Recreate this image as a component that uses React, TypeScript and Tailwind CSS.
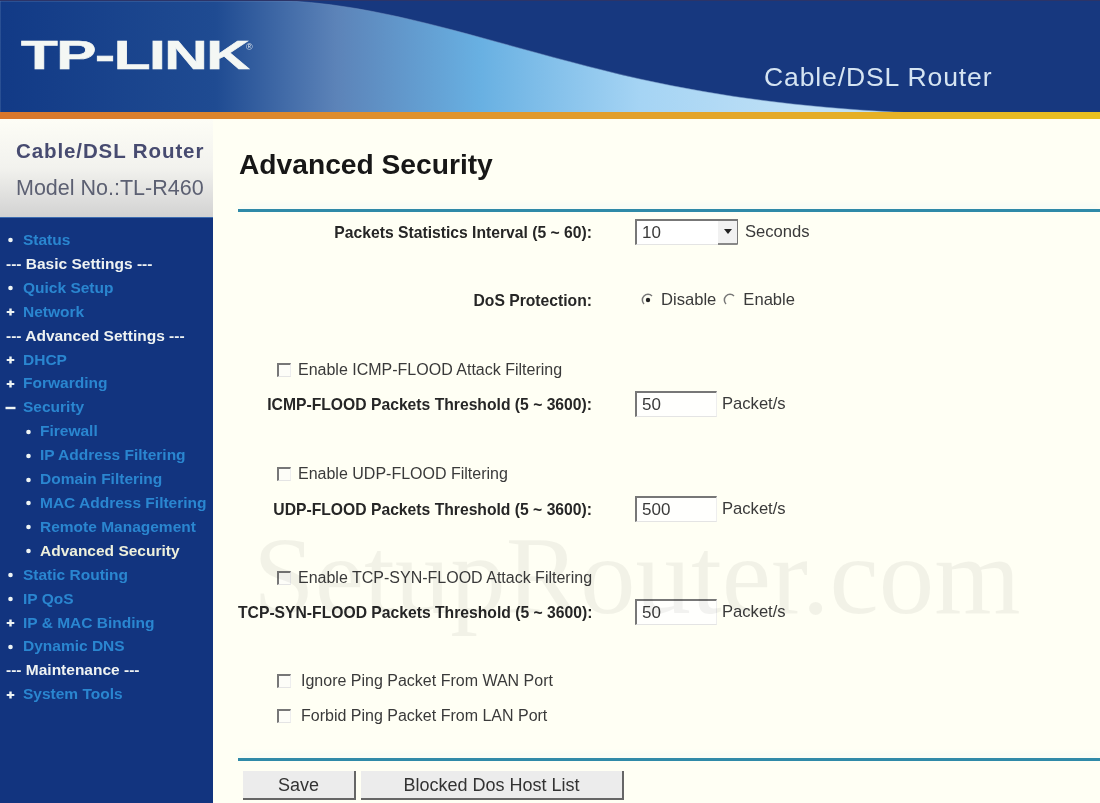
import type { ReactNode } from "react";

const menu = [
  { label: "Status", mark: "dot" },
  { label: "--- Basic Settings ---", head: true },
  { label: "Quick Setup", mark: "dot" },
  { label: "Network", mark: "plus" },
  { label: "--- Advanced Settings ---", head: true },
  { label: "DHCP", mark: "plus" },
  { label: "Forwarding", mark: "plus" },
  { label: "Security", mark: "minus" },
  { label: "Firewall", mark: "dot", sub: true },
  { label: "IP Address Filtering", mark: "dot", sub: true },
  { label: "Domain Filtering", mark: "dot", sub: true },
  { label: "MAC Address Filtering", mark: "dot", sub: true },
  { label: "Remote Management", mark: "dot", sub: true },
  { label: "Advanced Security", mark: "dot", sub: true, active: true },
  { label: "Static Routing", mark: "dot" },
  { label: "IP QoS", mark: "dot" },
  { label: "IP & MAC Binding", mark: "plus" },
  { label: "Dynamic DNS", mark: "dot" },
  { label: "--- Maintenance ---", head: true },
  { label: "System Tools", mark: "plus" },
];

function Mark({ kind }: { kind?: string }) {
  return (
    <svg width="11" height="11" viewBox="0 0 11 11" className="shrink-0" fill="#eef4f4">
      {kind === "dot" && <circle cx="5.5" cy="6" r="2.3" />}
      {kind === "plus" && <path d="M4.3 2.5h2.4v2.4h2.6v2.2H6.7v2.4H4.3V7.100H1.700V4.900h2.600z" />}
      {kind === "minus" && <rect x="0.500" y="4.800" width="10" height="2.400" />}
    </svg>
  );
}

function Sidebar() {
  return (
    <aside className="flex w-[213px] shrink-0 flex-col">
      <div className="h-[98px] bg-gradient-to-b from-[#fdfdf6] via-[#f2f2ee] to-[#d2d2d2] pl-4 pt-[20px]">
        <div className="text-[20.500px] leading-6 font-bold tracking-[0.9px] whitespace-nowrap text-[#474b70]">Cable/DSL Router</div>
        <div className="mt-[13px] text-[21.500px] leading-6 whitespace-nowrap text-[#5c6072]">Model No.:TL-R460</div>
      </div>
      <nav className="flex-1 border-t border-[#3d6cb0] bg-[#12347f] pt-[10px] text-[15.500px] leading-[23.900px] font-bold">
        {menu.map((item) =>
          item.head ? (
            <div key={item.label} className="pl-[6px] whitespace-nowrap text-[#eef2f2]">
              {item.label}
            </div>
          ) : (
            <div key={item.label} className={`flex items-center whitespace-nowrap ${item.sub ? "pl-[23px]" : "pl-[5px]"}`}>
              <Mark kind={item.mark} />
              <span className={item.sub ? "ml-[6px]" : "ml-[7px]"}>
                <span className={item.active ? "text-[#eef0dc]" : "text-[#2a86d0]"}>{item.label}</span>
              </span>
            </div>
          ),
        )}
      </nav>
    </aside>
  );
}

function Rule({ className }: { className: string }) {
  return <div className={`h-[3px] bg-[#2f8aa8] shadow-[0_-4px_6px_#eef8f8] ${className}`} />;
}

function Row({ label, className, children }: { label: string; className: string; children: ReactNode }) {
  return (
    <div className={`flex h-[26px] items-center ${className}`}>
      <div className="w-[354px] pt-[1px] text-right text-[15.700px] font-bold whitespace-nowrap text-[#262626]">{label}</div>
      <div className="ml-[43px] flex items-center text-[16.600px] text-[#3a3a3a]">{children}</div>
    </div>
  );
}

function CheckRow({ label, className, textGap }: { label: string; className: string; textGap: string }) {
  return (
    <div className={`flex h-[22px] items-center pl-[39px] text-[16px] whitespace-nowrap text-[#3a3a3a] ${className}`}>
      <span className="h-[14px] w-[14px] border-t-2 border-r border-b border-l-2 border-t-[#777] border-r-[#eeeeee] border-b-[#e4e4e4] border-l-[#777] bg-[#fdfdf8]" />
      <span className={textGap}>{label}</span>
    </div>
  );
}

function TextBox({ value }: { value: string }) {
  return (
    <div className="h-[26px] w-[82px] border-t-2 border-r border-b border-l-2 border-t-[#777] border-r-[#eeeeee] border-b-[#e4e4e4] border-l-[#777] bg-white/80 pl-[5px] text-[17px] leading-[24px]">
      {value}
    </div>
  );
}

function Radio({ on }: { on?: boolean }) {
  return (
    <svg width="14" height="14" viewBox="0 0 14 14" className="shrink-0" fill="none">
      <path d="M11 3a5.500 5.500 0 0 0-8 8" stroke="#777" strokeWidth="1.500" />
      {on && <circle cx="7" cy="7" r="2.200" fill="#222" />}
    </svg>
  );
}

function Button({ label, className }: { label: string; className: string }) {
  return (
    <div className={`flex h-[29px] items-center justify-center border-r-2 border-b-2 border-r-[#666] border-b-[#666] bg-[#ececec] pt-[1px] text-[18px] text-[#333] ${className}`}>
      {label}
    </div>
  );
}

export default function App() {
  return (
    <div className="relative h-[803px] w-[1100px] overflow-hidden bg-[#fffff4] font-['Liberation_Sans',Arial,sans-serif] blur-[0.4px]">
      <header className="relative h-[112px] overflow-hidden border-t border-[#2c3468] bg-[#17387f]">
        <svg className="absolute inset-0" width="1100" height="112" viewBox="0 0 1100 112">
          <defs>
            <linearGradient id="wave" x1="0" x2="800" y1="0" y2="0" gradientUnits="userSpaceOnUse">
              <stop offset="0" stopColor="#123a86" />
              <stop offset="0.27" stopColor="#1f4b92" />
              <stop offset="0.42" stopColor="#5c83b8" />
              <stop offset="0.6" stopColor="#68b0e2" />
              <stop offset="0.8" stopColor="#a5d4f4" />
              <stop offset="1" stopColor="#bfe0f6" />
            </linearGradient>
          </defs>
          <path d="M290 0C400 6 500 46 640 78C730 98 820 108 915 112H0V0Z" fill="url(#wave)" stroke="#6f8fbe" strokeWidth="1" strokeOpacity="0.5" />
        </svg>
        <div className="absolute top-[26px] left-[21px] origin-left scale-x-[1.47] text-[41px] leading-[56px] font-bold tracking-[-1px] text-[#f4f7f4] [-webkit-text-stroke:0.6px_#f4f7f4]">
          TP-LINK
        </div>
        <div className="absolute top-[40px] left-[246px] text-[9px] leading-3 text-[#dfe6ee]">®</div>
        <div className="absolute top-[60px] left-[764px] text-[26.500px] leading-8 tracking-[0.9px] whitespace-nowrap text-[#d5e4f2]">
          Cable/DSL Router
        </div>
      </header>
      <div className="h-[7px] bg-gradient-to-r from-[#d8762c] via-[#e19a2c] to-[#e8c020]" />
      <div className="flex h-[684px]">
        <Sidebar />
        <main className="flex-1 pl-[25px]">
          <h1 className="mt-[29px] ml-[1px] text-[28.200px] leading-8 font-bold whitespace-nowrap text-[#171717]">
            Advanced Security
          </h1>
          <Rule className="mt-[29px]" />
          <Row label="Packets Statistics Interval (5 ~ 60):" className="mt-[7px]">
            <div className="flex h-[26px] w-[103px] items-center border-t-2 border-r border-b border-l-2 border-t-[#777] border-r-[#777] border-b-[#e4e4e4] border-l-[#777] bg-white pl-[5px] text-[17px]">
              <span className="flex-1">10</span>
              <span className="flex h-[24px] w-[19px] items-center justify-center border-b-2 border-b-[#888] bg-[#f1f1f1]">
                <svg width="8" height="5" viewBox="0 0 8 5">
                  <path d="M0 0h8L4 5z" fill="#222" />
                </svg>
              </span>
            </div>
            <span className="ml-[7px]">Seconds</span>
          </Row>
          <Row label="DoS Protection:" className="mt-[42px]">
            <span className="ml-[6px]"><Radio on /></span>
            <span className="ml-[6px]">Disable</span>
            <span className="ml-[7px]"><Radio /></span>
            <span className="ml-[6px]">Enable</span>
          </Row>
          <CheckRow label="Enable ICMP-FLOOD Attack Filtering" className="mt-[46px]" textGap="ml-[7px]" />
          <Row label="ICMP-FLOOD Packets Threshold (5 ~ 3600):" className="mt-[10px]">
            <TextBox value="50" />
            <span className="ml-[5px]">Packet/s</span>
          </Row>
          <CheckRow label="Enable UDP-FLOOD Filtering" className="mt-[46px]" textGap="ml-[7px]" />
          <Row label="UDP-FLOOD Packets Threshold (5 ~ 3600):" className="mt-[11px]">
            <TextBox value="500" />
            <span className="ml-[5px]">Packet/s</span>
          </Row>
          <CheckRow label="Enable TCP-SYN-FLOOD Attack Filtering" className="mt-[45px]" textGap="ml-[7px]" />
          <Row label="TCP-SYN-FLOOD Packets Threshold (5 ~ 3600):" className="mt-[10px]">
            <TextBox value="50" />
            <span className="ml-[5px]">Packet/s</span>
          </Row>
          <CheckRow label="Ignore Ping Packet From WAN Port" className="mt-[45px]" textGap="ml-[10px]" />
          <CheckRow label="Forbid Ping Packet From LAN Port" className="mt-[13px]" textGap="ml-[10px]" />
          <Rule className="mt-[31px]" />
          <div className="mt-[10px] flex gap-[5px] pl-[5px]">
            <Button label="Save" className="w-[113px]" />
            <Button label="Blocked Dos Host List" className="w-[263px]" />
          </div>
        </main>
      </div>
      <div className="pointer-events-none absolute top-[511px] left-[253px] font-['Liberation_Serif',serif] text-[111px] leading-[130px] whitespace-nowrap text-black/[0.05]">
        SetupRouter.com
      </div>
    </div>
  );
}
